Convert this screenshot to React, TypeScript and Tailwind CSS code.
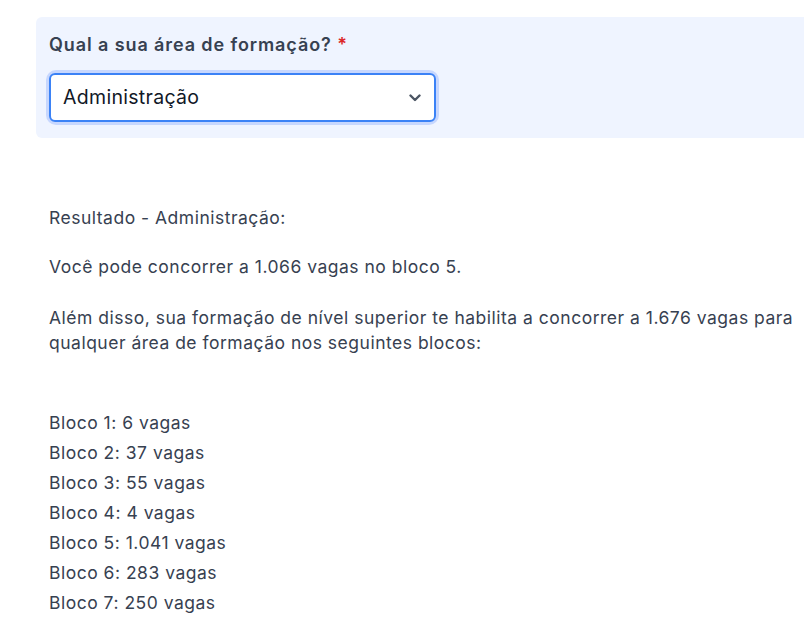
const blocos = [
  { n: 1, v: '6' },
  { n: 2, v: '37' },
  { n: 3, v: '55' },
  { n: 4, v: '4' },
  { n: 5, v: '1.041' },
  { n: 6, v: '283' },
  { n: 7, v: '250' },
]

const App = () => (
  <div
    className="w-[804px] h-[622px] overflow-hidden bg-white pl-[36px] pt-[17px] text-[#374151]"
    style={{ fontFamily: 'Inter, "Noto Sans", sans-serif' }}
  >
    <div className="w-[800px] rounded-l-md bg-[#eff4ff] px-[13px] pt-[16px] pb-[16px]">
      <label className="block text-[18px] font-semibold leading-6 tracking-[0.9px] text-[#374151]">
        Qual a sua área de formação? <span className="text-[#dc2626]">*</span>
      </label>
      <div className="mt-[16px] w-[387px] rounded-[7px] ring-[3px] ring-[#c7d7fe]">
        <div className="flex h-[49px] items-center justify-between rounded-[6px] border-2 border-[#3b82f6] bg-white pl-[12px] pr-[13px]">
          <span className="text-[19.5px] tracking-[0.3px] text-[#111827]">Administração</span>
          <svg width="12" height="8" viewBox="0 0 12 8" fill="none" className="text-[#4b5563]">
            <path d="M1.5 1.5 L6 6 L10.5 1.5" stroke="currentColor" strokeWidth="2.4" strokeLinecap="round" strokeLinejoin="round" />
          </svg>
        </div>
      </div>
    </div>

    <div className="w-[768px] pl-[13px] pt-[68px] text-[17.5px] leading-6 tracking-[0.5px]">
      <p>Resultado - Administração:</p>
      <p className="mt-[25px]">Você pode concorrer a 1.066 vagas no bloco 5.</p>
      <p className="mt-[26px] leading-[25px]">
        Além disso, sua formação de nível superior te habilita a concorrer a 1.676 vagas para
        qualquer área de formação nos seguintes blocos:
      </p>
      <ul className="mt-[53px]">
        {blocos.map((b) => (
          <li key={b.n} className="leading-[30px]">
            Bloco {b.n}: {b.v} vagas
          </li>
        ))}
      </ul>
    </div>
  </div>
)

export default App
